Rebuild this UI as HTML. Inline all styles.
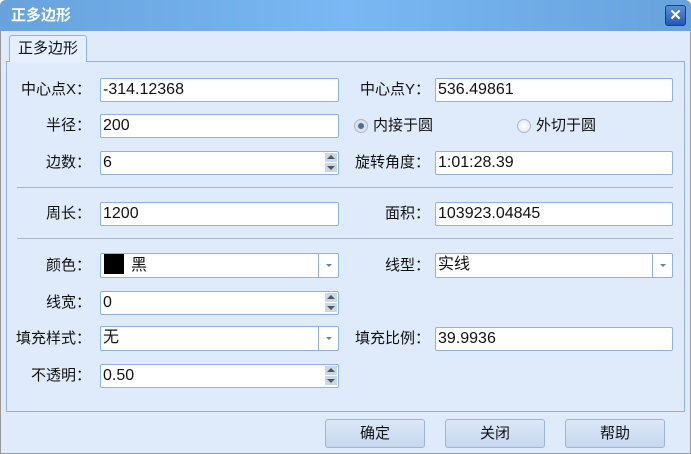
<!DOCTYPE html>
<html><head><meta charset="utf-8"><style>
*{box-sizing:border-box;margin:0;padding:0}
body{width:691px;height:454px;overflow:hidden;background:#fff;font-family:"Liberation Sans","Noto Sans CJK SC",sans-serif;font-size:15px;color:#111;position:relative}
.win{position:absolute;left:0;top:0;width:691px;height:454px;background:#dfebfa;box-shadow:inset 1px 0 #999,inset -1px 0 #999,inset 0 -1px #999;border-radius:6px 6px 0 0;overflow:hidden}
.title{position:absolute;left:0;top:0;width:691px;height:31px;background:linear-gradient(90deg,#67a2dc,#79b8f4 50%,#67a2dc);color:#fff;font-weight:bold;font-size:15px;line-height:31px;padding-left:11px}
.x{position:absolute;left:665px;top:5px;width:21px;height:21px;border-radius:3px;background:linear-gradient(#5b8fd8,#2456b0);border:1px solid #1d3f7a;color:#fff;font-weight:bold;text-align:center;line-height:19px;font-size:15px}
.tab{position:absolute;left:9px;top:35px;width:78px;height:27px;background:#e6f0fc;border:1px solid #8fb3e0;border-bottom:none;border-radius:3px 3px 0 0;font-size:15px;line-height:26px;text-align:center;z-index:2}
.panel{position:absolute;left:6px;top:61px;width:679px;height:351px;border:1px solid #8fb3e0}
.l{position:absolute;font-size:15px;line-height:23px;text-align:right;white-space:nowrap}
.in{position:absolute;height:24px;background:#fff;border:1px solid #8fb3e0;border-radius:2px;line-height:22px;padding-left:2px;font-size:16px;white-space:nowrap}
.sp{position:absolute;right:1px;top:1px;width:14px;height:20px;border-left:1px solid #fff}
.sp:before,.sp:after{content:"";position:absolute;left:1px;width:12px;height:9px;background:#c9d7ea}
.sp:before{top:0}.sp:after{top:10px}
.sp i{position:absolute;left:3px;width:0;height:0;border-left:4px solid transparent;border-right:4px solid transparent;z-index:2}
.dd{position:absolute;right:0;top:0;width:20px;height:22px;border-left:1px solid #8fb3e0}
.dd:after{content:"";position:absolute;left:7px;top:10px;border-left:3px solid transparent;border-right:3px solid transparent;border-top:3px solid #6080b0}
.hr{position:absolute;left:17px;width:656px;height:1px;background:#a9b8c8}
.btn{position:absolute;top:419px;width:100px;height:29px;border:1px solid #9cb5d8;border-radius:3px;background:linear-gradient(#dbe7f6,#c6d8f0);text-align:center;line-height:27px;font-size:15px}
.r{position:absolute;width:14px;height:14px;border-radius:50%;border:1px solid #b0b8c4;background:radial-gradient(#fff,#dde3ea)}
</style></head><body><div class="win">
<div class="title">正多边形</div><div class="x">✕</div>
<div class="tab">正多边形</div>
<div class="panel"></div>
<div class="l" style="left:0;width:91px;top:78px">中心点X：</div>
<div class="in" style="left:100px;top:78px;width:239px">-314.12368</div>
<div class="l" style="left:330px;width:100px;top:78px">中心点Y：</div>
<div class="in" style="left:435px;top:78px;width:238px">536.49861</div>
<div class="l" style="left:0;width:91px;top:114px">半径：</div>
<div class="in" style="left:100px;top:114px;width:239px">200</div>
<div class="r" style="left:354px;top:119px;background:radial-gradient(#4a6e9a 30%,#dde3ea 40%)"></div>
<div class="l" style="left:373px;top:114px;text-align:left">内接于圆</div>
<div class="r" style="left:517px;top:119px"></div>
<div class="l" style="left:536px;top:114px;text-align:left">外切于圆</div>
<div class="l" style="left:0;width:91px;top:151px">边数：</div>
<div class="in" style="left:100px;top:151px;width:239px">6<div class="sp"><i style="top:2px;border-bottom:4px solid #555"></i><i style="top:13px;border-top:4px solid #555"></i></div></div>
<div class="l" style="left:330px;width:100px;top:151px">旋转角度：</div>
<div class="in" style="left:435px;top:151px;width:238px">1:01:28.39</div>
<div class="hr" style="top:187px"></div>
<div class="l" style="left:0;width:91px;top:202px">周长：</div>
<div class="in" style="left:100px;top:202px;width:239px">1200</div>
<div class="l" style="left:330px;width:100px;top:202px">面积：</div>
<div class="in" style="left:435px;top:202px;width:238px">103923.04845</div>
<div class="hr" style="top:238px"></div>
<div class="l" style="left:0;width:91px;top:254px">颜色：</div>
<div class="in" style="left:100px;top:253px;width:239px;height:25px"><span style="display:inline-block;width:20px;height:20px;background:#000;vertical-align:-4px;margin:0 7px 0 1px"></span>黑<div class="dd" style="height:23px"></div></div>
<div class="l" style="left:330px;width:100px;top:254px">线型：</div>
<div class="in" style="left:435px;top:253px;width:238px;height:25px">实线<div class="dd" style="height:23px"></div></div>
<div class="l" style="left:0;width:91px;top:291px">线宽：</div>
<div class="in" style="left:100px;top:291px;width:239px">0<div class="sp"><i style="top:2px;border-bottom:4px solid #555"></i><i style="top:13px;border-top:4px solid #555"></i></div></div>
<div class="l" style="left:0;width:91px;top:327px">填充样式：</div>
<div class="in" style="left:100px;top:326px;width:239px;height:25px">无<div class="dd" style="height:23px"></div></div>
<div class="l" style="left:330px;width:100px;top:327px">填充比例：</div>
<div class="in" style="left:435px;top:327px;width:238px">39.9936</div>
<div class="l" style="left:0;width:91px;top:364px">不透明：</div>
<div class="in" style="left:100px;top:364px;width:239px">0.50<div class="sp"><i style="top:2px;border-bottom:4px solid #555"></i><i style="top:13px;border-top:4px solid #555"></i></div></div>
<div class="btn" style="left:325px">确定</div>
<div class="btn" style="left:445px">关闭</div>
<div class="btn" style="left:565px">帮助</div>
</div></body></html>
